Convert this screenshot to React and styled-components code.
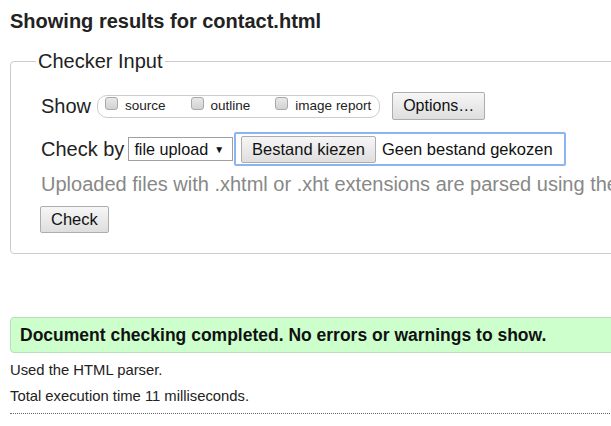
import React from "react";
import styled, { createGlobalStyle } from "styled-components";

const Global = createGlobalStyle`
  html, body { margin: 0; padding: 0; background: #fff; overflow: hidden; }
  body { font-family: "Liberation Sans", Arial, sans-serif; color: #222; }
`;

const Page = styled.div`
  width: 780px;
  padding: 0 10px;
`;

const Title = styled.h2`
  margin: 10px 0 0;
  font-size: 20px;
  line-height: 23px;
  font-weight: bold;
  color: #222;
`;

const Fieldset = styled.fieldset`
  margin: 17px 0 0;
  padding: 0 30px 20px;
  border: 1px solid #ccc;
  border-radius: 4px;
  min-width: 0;
`;

const Legend = styled.legend`
  margin-left: -5px;
  padding: 0 2px;
  font-size: 20px;
  line-height: 23px;
  color: #222;
`;

const Row = styled.div`
  display: flex;
  align-items: center;
  margin-top: ${(p) => p.$mt || 0}px;
  font-size: 20px;
  line-height: 23px;
  white-space: nowrap;
`;

const RowLabel = styled.span`
  margin-right: ${(p) => p.$mr || 5}px;
  color: #222;
`;

const Group = styled.span`
  display: inline-flex;
  align-items: center;
  height: 21px;
  border: 1px solid #ccc;
  border-radius: 10px;
  padding: 0 8px 0 7px;
`;

const Opt = styled.label`
  display: inline-flex;
  align-items: center;
  font-size: 13.5px;
  line-height: 16px;
  color: #222;
  margin-right: ${(p) => (p.$last ? 0 : 25)}px;
`;

const Box = styled.span`
  display: inline-block;
  width: 11px;
  height: 11px;
  border: 1px solid #a8a8a8;
  border-radius: 3px;
  background: linear-gradient(#e8e8e8, #d2d2d2);
  margin-right: 7px;
  position: relative;
  top: -3px;
`;

const Button = styled.button`
  font-family: "Liberation Sans", Arial, sans-serif;
  font-size: ${(p) => p.$fs || 16}px;
  color: #111;
  height: ${(p) => p.$h || 28}px;
  padding: 0 ${(p) => p.$px || 10}px;
  border: 1px solid #adadad;
  border-radius: 2px;
  background: linear-gradient(#f6f6f6, #dedede);
  margin-left: ${(p) => p.$ml || 0}px;
  cursor: default;
`;

const Select = styled.span`
  display: inline-flex;
  align-items: center;
  height: 22px;
  border: 1px solid #a0a0a0;
  padding: 0 8px 0 5px;
  font-size: 16.2px;
  color: #111;
  background: #fff;
`;

const Arrow = styled.span`
  font-size: 10px;
  margin-left: 6px;
`;

const FileBox = styled.span`
  display: inline-flex;
  align-items: center;
  margin-left: 1px;
  height: 30px;
  border: 2px solid #8cb4f5;
  border-radius: 2px;
  padding: 0 11px 0 5px;
  font-size: 16.5px;
  color: #111;
`;

const FileName = styled.span`
  margin-left: 6px;
`;

const Hint = styled.div`
  margin-top: 7px;
  font-size: 20px;
  line-height: 23px;
  color: #888;
  white-space: nowrap;
`;

const Actions = styled.div`
  margin-top: 10px;
  margin-left: -1px;
`;

const Success = styled.div`
  margin-top: 63px;
  height: 34px;
  display: flex;
  align-items: center;
  padding: 0 9px;
  background: #ccffcc;
  border: 1px solid #bbddbb;
  border-radius: 4px;
  font-size: 17.5px;
  font-weight: bold;
  color: #111;
  white-space: nowrap;
`;

const Note = styled.p`
  margin: ${(p) => p.$mt || 0}px 0 0;
  font-size: 14.8px;
  line-height: 17px;
  color: #222;
`;

const Divider = styled.hr`
  margin: 8px 0 0;
  border: 0;
  border-top: 1px dotted #666;
`;

export default function App() {
  return (
    <Page>
      <Global />
      <Title>Showing results for contact.html</Title>
      <Fieldset>
        <Legend>Checker Input</Legend>
        <Row $mt={19}>
          <RowLabel $mr={6}>Show</RowLabel>
          <Group>
            <Opt><Box />source</Opt>
            <Opt><Box />outline</Opt>
            <Opt $last><Box />image report</Opt>
          </Group>
          <Button $ml={12} $px={10}>Options…</Button>
        </Row>
        <Row $mt={12}>
          <RowLabel $mr={4}>Check by</RowLabel>
          <Select>
            file upload<Arrow>▼</Arrow>
          </Select>
          <FileBox>
            <Button $h={27} $px={10} $fs={16.5}>Bestand kiezen</Button>
            <FileName>Geen bestand gekozen</FileName>
          </FileBox>
        </Row>
        <Hint>Uploaded files with .xhtml or .xht extensions are parsed using the XML parser.</Hint>
        <Actions>
          <Button $h={27} $px={10} $fs={16.5}>Check</Button>
        </Actions>
      </Fieldset>
      <Success>Document checking completed. No errors or warnings to show.</Success>
      <Note $mt={9}>Used the HTML parser.</Note>
      <Note $mt={9}>Total execution time 11 milliseconds.</Note>
      <Divider />
    </Page>
  );
}
